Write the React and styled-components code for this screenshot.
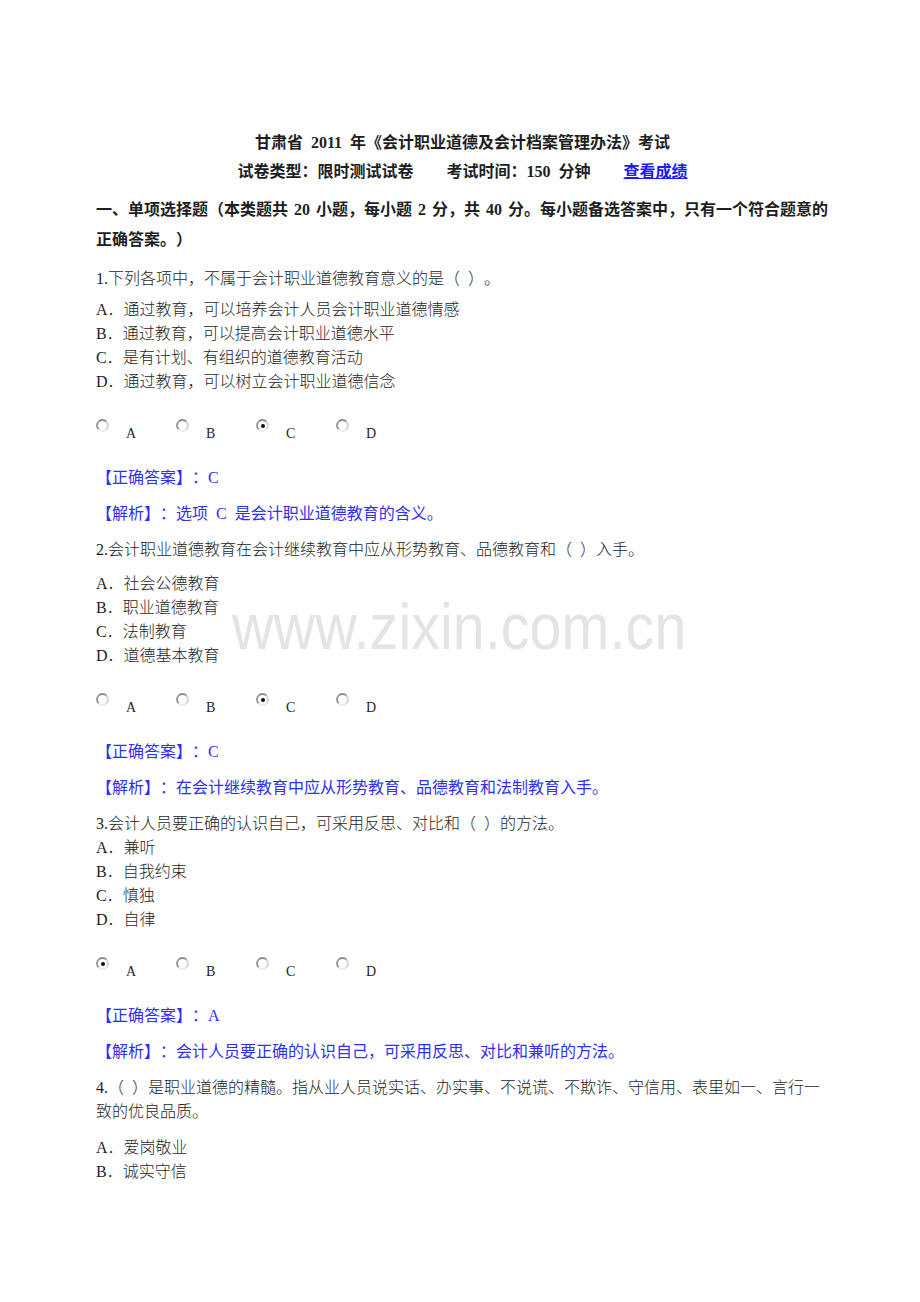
import React from 'react';
import styled, { createGlobalStyle } from 'styled-components';

const GlobalStyle = createGlobalStyle`
  body {
    margin: 0;
    background: #ffffff;
    color: #1e1e1e;
    font-family: "Liberation Serif", "Noto Sans CJK SC", serif;
    font-size: 16px;
    word-spacing: 4px;
    text-spacing-trim: space-all;
  }
`;

const Page = styled.div`
  position: relative;
  width: 920px;
  box-sizing: border-box;
  padding: 128px 91px 60px 96px;
`;

const TitleLine = styled.div`
  text-align: center;
  font-weight: bold;
  line-height: 29px;
`;

const MetaLine = styled.div`
  display: flex;
  justify-content: center;
  gap: 33px;
  font-weight: bold;
  line-height: 29px;
`;

const ResultLink = styled.a`
  color: #1a1aff;
  text-decoration: underline;
  cursor: pointer;
`;

const SectionHeading = styled.div`
  margin-top: 9px;
  font-weight: bold;
  line-height: 30px;
  word-spacing: 2px;
`;

const QuestionText = styled.div`
  margin-top: 12px;
  line-height: 24px;
  font-weight: 300;
`;

const OptionList = styled.div`
  margin-top: ${(p) => p.$gap}px;
`;

const OptionLine = styled.div`
  line-height: 24px;
  font-weight: 300;
`;

const RadioRow = styled.div`
  display: flex;
  margin-top: 25px;
  height: 23px;
`;

const RadioItem = styled.label`
  display: flex;
  align-items: flex-start;
  width: 80px;
`;

const Radio = styled.span`
  position: relative;
  display: block;
  width: 13px;
  height: 13px;
  box-sizing: border-box;
  border-radius: 50%;
  border: 2px solid;
  border-color: #8a8a8a #d6d6d6 #ececec #9a9a9a;
  background: #ffffff;

  &::after {
    content: '';
    display: ${(p) => (p.$checked ? 'block' : 'none')};
    position: absolute;
    left: 2.5px;
    top: 2.5px;
    width: 4px;
    height: 4px;
    border-radius: 50%;
    background: #111111;
  }
`;

const RadioLabel = styled.span`
  margin-left: 17px;
  margin-top: 7px;
  font-size: 14px;
  line-height: 16px;
  font-family: "Liberation Serif", serif;
`;

const AnswerLine = styled.div`
  margin-top: ${(p) => p.$gap}px;
  line-height: 24px;
  color: #2f2ff5;
`;

const Watermark = styled.div`
  position: absolute;
  left: 232px;
  top: 587px;
  font-family: "Liberation Sans", Arial, sans-serif;
  font-size: 65px;
  line-height: 80px;
  word-spacing: 0;
  color: #e4e4e4;
  white-space: nowrap;
  transform: scaleX(0.886);
  transform-origin: left center;
  pointer-events: none;
`;

const questions = [
  {
    text: '1.下列各项中，不属于会计职业道德教育意义的是（ ）。',
    gap: 7,
    options: [
      'A．通过教育，可以培养会计人员会计职业道德情感',
      'B．通过教育，可以提高会计职业道德水平',
      'C．是有计划、有组织的道德教育活动',
      'D．通过教育，可以树立会计职业道德信念',
    ],
    checked: 'C',
    answer: 'C',
    analysis: '选项 C 是会计职业道德教育的含义。',
  },
  {
    text: '2.会计职业道德教育在会计继续教育中应从形势教育、品德教育和（ ）入手。',
    gap: 10,
    options: ['A．社会公德教育', 'B．职业道德教育', 'C．法制教育', 'D．道德基本教育'],
    checked: 'C',
    answer: 'C',
    analysis: '在会计继续教育中应从形势教育、品德教育和法制教育入手。',
  },
  {
    text: '3.会计人员要正确的认识自己，可采用反思、对比和（ ）的方法。',
    gap: 0,
    options: ['A．兼听', 'B．自我约束', 'C．慎独', 'D．自律'],
    checked: 'A',
    answer: 'A',
    analysis: '会计人员要正确的认识自己，可采用反思、对比和兼听的方法。',
  },
  {
    text: '4.（ ）是职业道德的精髓。指从业人员说实话、办实事、不说谎、不欺诈、守信用、表里如一、言行一致的优良品质。',
    gap: 12,
    options: ['A．爱岗敬业', 'B．诚实守信'],
  },
];

const letters = ['A', 'B', 'C', 'D'];

const Question = ({ q }) => (
  <>
    <QuestionText>{q.text}</QuestionText>
    <OptionList $gap={q.gap}>
      {q.options.map((o) => (
        <OptionLine key={o}>{o}</OptionLine>
      ))}
    </OptionList>
    {q.answer && (
      <>
        <RadioRow>
          {letters.map((l) => (
            <RadioItem key={l}>
              <Radio $checked={q.checked === l} />
              <RadioLabel>{l}</RadioLabel>
            </RadioItem>
          ))}
        </RadioRow>
        <AnswerLine $gap={24}>【正确答案】：{q.answer}</AnswerLine>
        <AnswerLine $gap={12}>【解析】：{q.analysis}</AnswerLine>
      </>
    )}
  </>
);

const App = () => (
  <Page>
    <GlobalStyle />
    <TitleLine>甘肃省 2011 年《会计职业道德及会计档案管理办法》考试</TitleLine>
    <MetaLine>
      <span>试卷类型：限时测试试卷</span>
      <span>考试时间：150 分钟</span>
      <ResultLink>查看成绩</ResultLink>
    </MetaLine>
    <SectionHeading>
      一、单项选择题（本类题共 20 小题，每小题 2 分，共 40 分。每小题备选答案中，只有一个符合题意的正确答案。）
    </SectionHeading>
    {questions.map((q) => (
      <Question key={q.text} q={q} />
    ))}
    <Watermark>www.zixin.com.cn</Watermark>
  </Page>
);

export default App;
